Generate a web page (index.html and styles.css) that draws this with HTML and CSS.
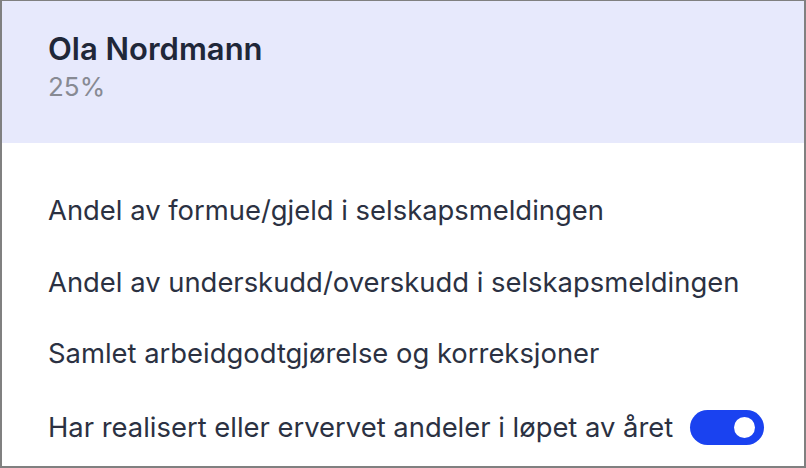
FILE: index.html
```html
<!DOCTYPE html>
<html lang="no">
<head>
    <meta charset="UTF-8">
    <title>Deltaker</title>
    <link rel="stylesheet" href="styles.css">
</head>
<body>
    <div class="card">
        <div class="card-header">
            <div class="name">Ola Nordmann</div>
            <div class="share">25%</div>
        </div>
        <ul class="items">
            <li>Andel av formue/gjeld i selskapsmeldingen</li>
            <li>Andel av underskudd/overskudd i selskapsmeldingen</li>
            <li>Samlet arbeidgodtgjørelse og korreksjoner</li>
            <li class="with-toggle">
                <span>Har realisert eller ervervet andeler i løpet av året</span>
                <span class="toggle on"><span class="knob"></span></span>
            </li>
        </ul>
    </div>
</body>
</html>
```

FILE: styles.css
```css
html, body {
    margin: 0;
    padding: 0;
}

body {
    font-family: Inter, "Noto Sans", sans-serif;
    color: #2b3142;
    background: #fff;
}

.card {
    width: 806px;
    height: 468px;
    box-sizing: border-box;
    border-style: solid;
    border-color: #808080;
    border-width: 1px 2px 2px 2px;
    overflow: hidden;
}

.card-header {
    background-color: #e7e9fc;
    height: 142px;
    box-sizing: border-box;
    padding: 30px 46px 0;
}

.name {
    font-size: 31px;
    font-weight: 600;
    color: #1f2739;
    line-height: 36px;
}

.share {
    font-size: 26px;
    color: #878a93;
    line-height: 30px;
    margin-top: 5px;
}

.items {
    list-style: none;
    margin: 0;
    padding: 50px 20px 0 46px;
}

.items li {
    font-size: 27.4px;
    line-height: 34px;
    margin-bottom: 37.5px;
    white-space: nowrap;
}

.with-toggle {
    display: flex;
    align-items: center;
    gap: 17px;
    padding-top: 2px;
}

.toggle {
    flex-shrink: 0;
    display: inline-flex;
    align-items: center;
    justify-content: flex-end;
    width: 74px;
    height: 35px;
    border-radius: 18px;
    background: #1a42f0;
    box-sizing: border-box;
    padding: 0 9px;
}

.knob {
    width: 21px;
    height: 21px;
    border-radius: 50%;
    background: #fff;
}
```
